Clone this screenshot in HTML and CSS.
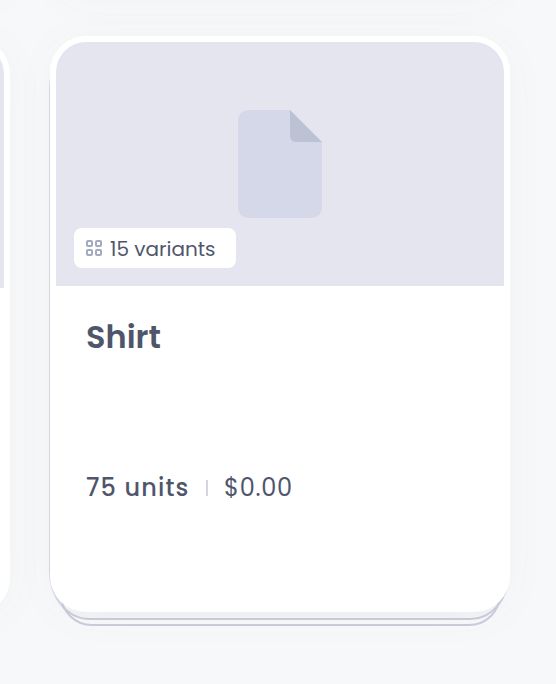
FILE: index.html
```html
<!DOCTYPE html>
<html lang="en">
<head>
    <meta charset="UTF-8">
    <meta name="viewport" content="width=device-width, initial-scale=1.0">
    <title>Products</title>
    <link rel="stylesheet" href="styles.css">
</head>
<body>
    <div class="product-row above">
        <div class="product-card"></div>
        <div class="product-card"></div>
    </div>
    <div class="product-row">
        <div class="product-card previous">
            <div class="product-image"></div>
        </div>

        <div class="product-card stacked">
            <div class="product-image">
                <svg class="file-icon" width="84" height="108" viewBox="0 0 84 108">
                    <path d="M10 0H52L84 32V98A10 10 0 0 1 74 108H10A10 10 0 0 1 0 98V10A10 10 0 0 1 10 0Z" fill="#d4d8e8"/>
                    <path d="M52 0L84 32H58A6 6 0 0 1 52 26Z" fill="#bdc1d4"/>
                </svg>
                <div class="variants">
                    <svg width="16" height="16" viewBox="0 0 16 16" fill="none" stroke="#a4a9be" stroke-width="2">
                        <rect x="1" y="1" width="5" height="5" rx="1"/>
                        <rect x="10" y="1" width="5" height="5" rx="1"/>
                        <rect x="1" y="10" width="5" height="5" rx="1"/>
                        <rect x="10" y="10" width="5" height="5" rx="1"/>
                    </svg>
                    <span class="variants-text">15 variants</span>
                </div>
            </div>
            <div class="product-info">
                <div class="product-name">Shirt</div>
                <div class="product-meta">
                    <span class="product-units">75 units</span>
                    <span class="divider"></span>
                    <span class="product-price">$0.00</span>
                </div>
            </div>
        </div>
    </div>
</body>
</html>
```

FILE: styles.css
```css
body {
    display: flow-root;
    margin: 0;
    height: 684px;
    overflow: hidden;
    background-color: #f7f8fa;
    color: #4f566b;
    font-family: Poppins, Inter, sans-serif;
}
.product-row {
    display: grid;
    grid-template-columns: 460px 460px;
    gap: 40px;
    align-items: start;
    margin-left: -450px;
    padding-top: 36px;
}
.above {
    height: 582px;
    margin-top: -582px;
    padding-top: 0;
}
.product-card {
    position: relative;
    box-sizing: border-box;
    height: 576px;
    padding: 6px;
    background-color: white;
    border-radius: 36px;
    box-shadow: 0 4px 44px rgba(70,100,90,0.04);
}
.previous {
    margin-top: 2px;
}
/* outlines of the cards lying under the top one */
.stacked::before,
.stacked::after {
    content: "";
    position: absolute;
    z-index: -1;
    box-sizing: border-box;
    border: 2px solid #cccbdc;
}
.stacked::before {
    top: 8px;
    right: 1px;
    bottom: -8px;
    left: -1px;
    border-left-color: #d8d7e4;
    border-radius: 38px 38px 38px 40px / 44px 44px 44px 48px;
    background-color: #f2f4f6;
}
.stacked::after {
    top: 14px;
    right: 9px;
    bottom: -14px;
    left: 10px;
    border-radius: 32px;
}
.product-image {
    display: flex;
    flex-direction: column;
    box-sizing: border-box;
    height: 244px;
    padding: 68px 18px 18px;
    background-color: #e5e5ef;
    border-radius: 30px 30px 0 0;
}
.file-icon {
    align-self: center;
}
.variants {
    display: flex;
    align-items: center;
    gap: 8px;
    box-sizing: border-box;
    width: 162px;
    height: 40px;
    margin-top: auto;
    padding: 0 12px;
    background-color: white;
    border-radius: 8px;
}
.variants-text {
    position: relative;
    top: 1px;
    font-size: 20px;
    white-space: nowrap;
}
.product-info {
    padding: 30px;
}
.product-name {
    height: 150px;
    font-size: 32px;
    font-weight: 600;
    line-height: 42px;
}
.product-meta {
    display: flex;
    align-items: center;
    height: 43px;
    font-size: 24px;
}
.product-units {
    width: 120px;
    font-weight: 500;
    letter-spacing: 1.15px;
}
.divider {
    width: 2px;
    height: 16px;
    margin-right: 16px;
    background-color: #d5d5e2;
}
.product-price {
    letter-spacing: 0.7px;
}
```
